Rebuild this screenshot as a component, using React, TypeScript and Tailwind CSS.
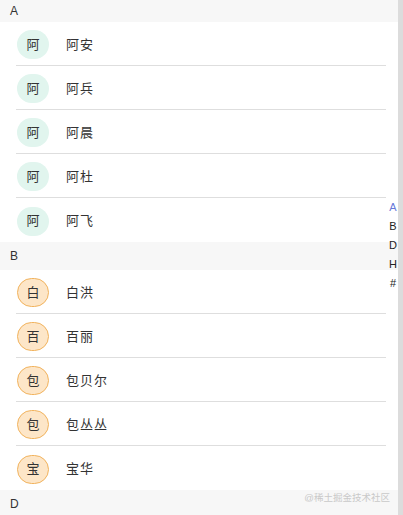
import React from 'react'

type Group = { letter: string; tone: 'mint' | 'orange'; names: string[] }

const groups: Group[] = [
  { letter: 'A', tone: 'mint', names: ['阿安', '阿兵', '阿晨', '阿杜', '阿飞'] },
  { letter: 'B', tone: 'orange', names: ['白洪', '百丽', '包贝尔', '包丛丛', '宝华'] },
  { letter: 'D', tone: 'mint', names: [] },
]

const indexLetters = ['A', 'B', 'D', 'H', '#']

const font = { fontFamily: '"Liberation Sans", "Noto Sans CJK SC", sans-serif' }

function Avatar({ char, tone }: { char: string; tone: Group['tone'] }) {
  return (
    <div
      className={
        tone === 'mint'
          ? 'w-[32px] h-[29px] rounded-full bg-[#e1f5ee] flex items-center justify-center text-[13px] text-[#333]'
          : 'w-[32px] h-[29px] rounded-full bg-[#fde6c8] border border-[#f1b35e] flex items-center justify-center text-[13px] text-[#333]'
      }
    >
      {char}
    </div>
  )
}

export default function App() {
  return (
    <div className="relative w-[403px] h-[515px] overflow-hidden bg-white" style={font}>
      <div className="flex h-full">
        <div className="flex-1 overflow-hidden">
          {groups.map((g, gi) => (
            <section key={g.letter}>
              <div
                className={
                  gi === 0
                    ? 'h-[22px] bg-[#f7f7f7] pl-[10px] flex items-center text-[12px] text-[#333]'
                    : 'h-[28px] bg-[#f7f7f7] pl-[10px] flex items-center text-[12px] text-[#333]'
                }
              >
                {g.letter}
              </div>
              <ul>
                {g.names.map((name, i) => (
                  <li key={name} className="h-[44px] px-4 flex flex-col">
                    <div className="flex-1 flex items-center gap-[17px] pl-[1px] pt-[2px]">
                      <Avatar char={name[0]} tone={g.tone} />
                      <span className="text-[13px] text-[#333] tracking-[1px]">{name}</span>
                    </div>
                    {i < g.names.length - 1 && <div className="h-px bg-[#dedede] mr-[-4px]" />}
                  </li>
                ))}
              </ul>
            </section>
          ))}
        </div>
        {/* scrollbar */}
        <div className="w-[5px] bg-[#dcdcdc]" />
      </div>

      {/* letter index */}
      <div className="absolute right-[6px] top-[198px] flex flex-col items-center">
        {indexLetters.map((l, i) => (
          <span
            key={l}
            className={i === 0 ? 'h-[19px] leading-[19px] text-[11px] text-[#6678d9]' : 'h-[19px] leading-[19px] text-[11px] text-[#222]'}
          >
            {l}
          </span>
        ))}
      </div>

      {/* watermark */}
      <div className="absolute right-[13px] top-[491px] text-[9.5px] text-[#c9c9c9]">@稀土掘金技术社区</div>
    </div>
  )
}
